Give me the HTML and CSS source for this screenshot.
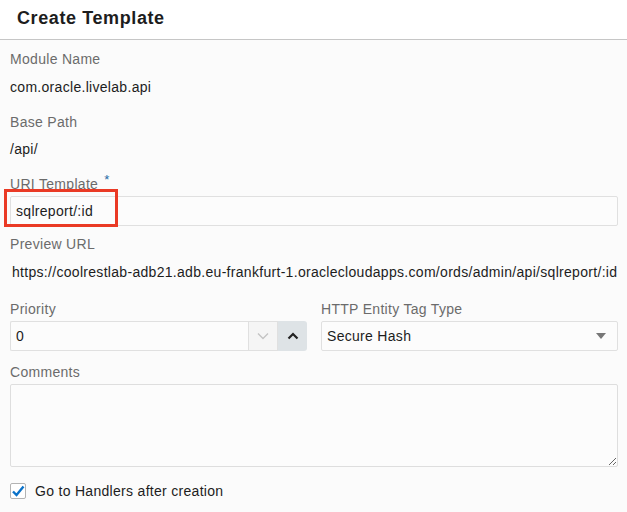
FILE: index.html
```html
<!DOCTYPE html>
<html lang="en">
<head>
<meta charset="utf-8">
<title>Create Template</title>
<link rel="stylesheet" href="styles.css">
</head>
<body>
<header class="dialog-header">
  <h1 class="dialog-title">Create Template</h1>
</header>
<main class="form">
  <div class="label first">Module Name</div>
  <div class="value">com.oracle.livelab.api</div>

  <div class="label gap-lg">Base Path</div>
  <div class="value tight">/api/</div>

  <div class="label gap-lg">URI Template <span class="req">*</span></div>
  <div class="field-wrap">
    <input class="text-input" type="text" value="sqlreport/:id">
    <span class="highlight"></span>
  </div>

  <div class="label gap-sm">Preview URL</div>
  <div class="value url">https://coolrestlab-adb21.adb.eu-frankfurt-1.oraclecloudapps.com/ords/admin/api/sqlreport/:id</div>

  <div class="two-col">
    <div class="col">
      <div class="label">Priority</div>
      <div class="spinner">
        <input class="text-input spin-input" type="text" value="0">
        <span class="spin-btn down">
          <svg width="12" height="8" viewBox="0 0 12 8"><path d="M1 1.5 L6 6.5 L11 1.5" fill="none" stroke="#c4c4c4" stroke-width="1.4"/></svg>
        </span>
        <span class="spin-btn up">
          <svg width="12" height="8" viewBox="0 0 12 8"><path d="M1.5 6.5 L6 2 L10.5 6.5" fill="none" stroke="#222" stroke-width="2.2"/></svg>
        </span>
      </div>
    </div>
    <div class="col">
      <div class="label">HTTP Entity Tag Type</div>
      <div class="select">
        <span class="select-text">Secure Hash</span>
        <svg class="caret" width="10" height="6" viewBox="0 0 10 6"><path d="M0 0 H10 L5 6 Z" fill="#777"/></svg>
      </div>
    </div>
  </div>

  <div class="label gap-md">Comments</div>
  <textarea class="textarea"></textarea>

  <label class="check-row">
    <span class="checkbox">
      <svg width="14" height="12" viewBox="0 0 14 12"><path d="M2 6.5 L5.5 10 L12.5 1.5" fill="none" stroke="#0a72c9" stroke-width="2.4"/></svg>
    </span>
    <span class="check-label">Go to Handlers after creation</span>
  </label>
</main>
</body>
</html>
```

FILE: styles.css
```css
* { box-sizing: border-box; }

html, body {
  margin: 0;
  padding: 0;
  background: #fbfbfb;
  font-family: "Liberation Sans", Arial, sans-serif;
  font-size: 14px;
  letter-spacing: 0.3px;
  color: #161513;
}

.dialog-header {
  height: 40px;
  background: #ffffff;
  border-bottom: 1px solid #c6c6c6;
  padding-left: 17px;
  display: flex;
  align-items: center;
}

.dialog-title {
  margin: 0;
  font-size: 18px;
  font-weight: bold;
  color: #1d1d1d;
  letter-spacing: 0.6px;
  padding-bottom: 2px;
}

.form {
  padding: 0 9px 0 10px;
}

.label {
  line-height: 20px;
  height: 20px;
  color: #6b6b6b;
  font-size: 14px;
}
.label.first { margin-top: 9px; }
.label.gap-lg { margin-top: 15px; }
.label.gap-sm { margin-top: 8px; }
.label.gap-md { margin-top: 11px; }

.req {
  color: #1b6aa5;
  font-size: 13px;
  position: relative;
  top: -5px;
  margin-left: 2px;
}

.value {
  line-height: 20px;
  margin-top: 8px;
  color: #1d1d1d;
}
.value.tight { margin-top: 7px; }
.value.url {
  margin-top: 8px;
  padding-left: 2px;
  white-space: nowrap;
}

.field-wrap {
  position: relative;
  margin-top: 2px;
}

.text-input {
  display: block;
  width: 100%;
  height: 30px;
  border: 1px solid #e0e0e0;
  border-radius: 2px;
  background: #fcfcfc;
  font-family: inherit;
  font-size: 14px;
  letter-spacing: 0.3px;
  color: #1d1d1d;
  padding: 0 5px;
  outline: none;
  margin: 0;
}

.highlight {
  position: absolute;
  left: -6px;
  top: -7px;
  width: 114px;
  height: 38px;
  border: 3px solid #ea3a25;
  pointer-events: none;
}

.two-col {
  display: grid;
  grid-template-columns: 1fr 1fr;
  column-gap: 14px;
  margin-top: 17px;
}

.col .label + * { margin-top: 2px; }

.spinner {
  display: flex;
  height: 30px;
}
.spin-input {
  flex: 1;
  width: auto;
  border-right: none;
  border-radius: 2px 0 0 2px;
}
.spin-btn {
  width: 30px;
  height: 30px;
  display: flex;
  align-items: center;
  justify-content: center;
}
.spin-btn.down {
  background: #f5f5f5;
  border: 1px solid #e0e0e0;
}
.spin-btn.up {
  width: 29px;
  background: #dee3e6;
  border-radius: 0 3px 3px 0;
}

.select {
  height: 30px;
  border: 1px solid #e0e0e0;
  border-radius: 2px;
  background: #fcfcfc;
  display: flex;
  align-items: center;
  justify-content: space-between;
  padding: 0 11px 0 5px;
}
.select-text { color: #1d1d1d; }

.textarea {
  display: block;
  width: 100%;
  height: 83px;
  margin: 2px 0 0 0;
  border: 1px solid #dedede;
  border-radius: 2px;
  background: #fcfcfc;
  font-family: inherit;
  font-size: 14px;
  outline: none;
}

.check-row {
  display: flex;
  align-items: center;
  height: 20px;
  margin-top: 14px;
}
.checkbox {
  width: 16px;
  height: 16px;
  border: 1px solid #b3b3b3;
  border-radius: 2px;
  background: #fff;
  display: flex;
  align-items: center;
  justify-content: center;
}
.check-label {
  margin-left: 9px;
  color: #1d1d1d;
}
```
